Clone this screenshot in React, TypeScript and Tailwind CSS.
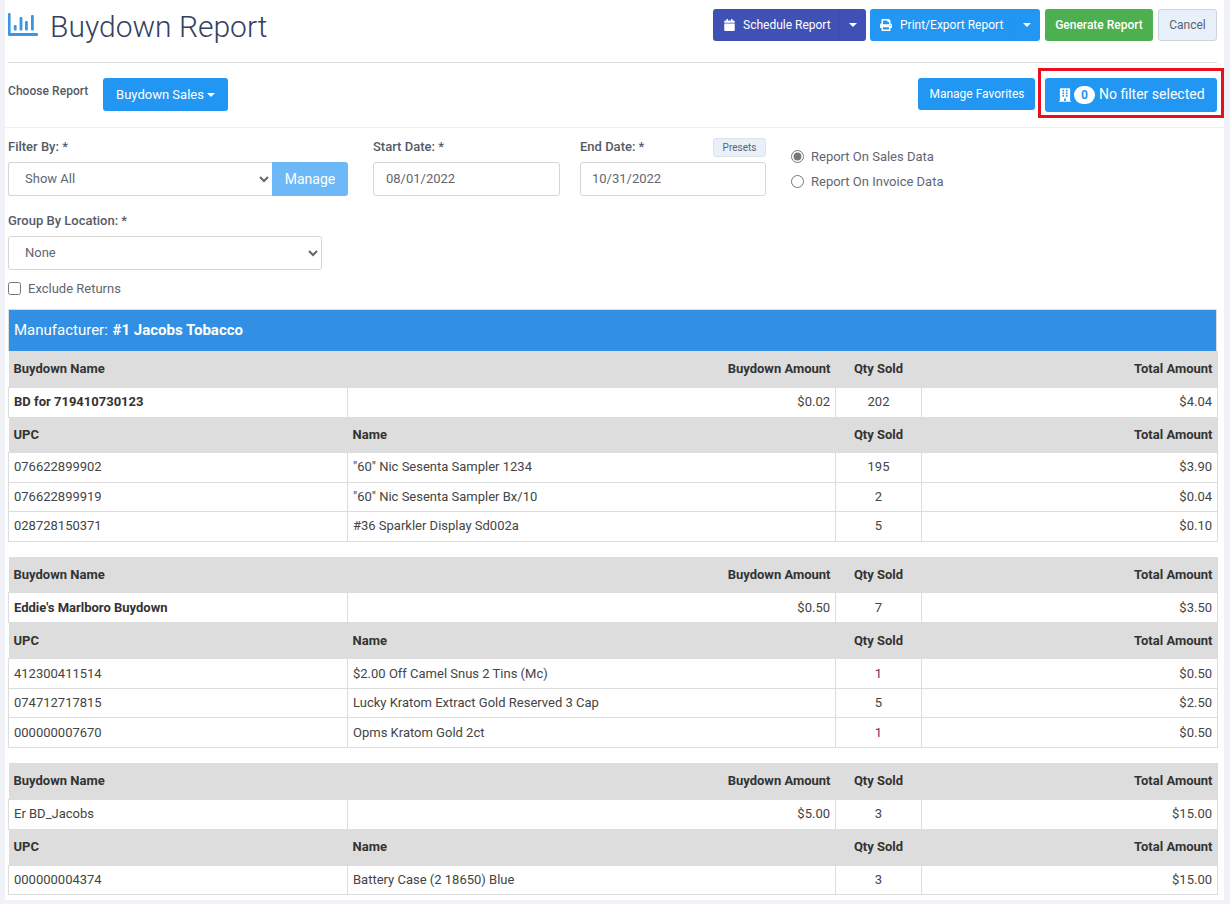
import { FaBuilding, FaCalendar, FaPrint } from 'react-icons/fa';

type Row = { upc: string; name: string; qty: string; total: string; h: string; link?: boolean };
type Group = {
  name: string;
  bold?: boolean;
  amount: string;
  qty: string;
  total: string;
  gap: string;
  heights: [string, string, string];
  rows: Row[];
};

const groups: Group[] = [
  {
    name: 'BD for 719410730123',
    bold: true,
    amount: '$0.02',
    qty: '202',
    total: '$4.04',
    gap: 'mt-0',
    heights: ['h-[36px]', 'h-[30px]', 'h-[35px]'],
    rows: [
      { upc: '076622899902', name: '"60" Nic Sesenta Sampler 1234', qty: '195', total: '$3.90', h: 'h-[30px]' },
      { upc: '076622899919', name: '"60" Nic Sesenta Sampler Bx/10', qty: '2', total: '$0.04', h: 'h-[29px]' },
      { upc: '028728150371', name: '#36 Sparkler Display Sd002a', qty: '5', total: '$0.10', h: 'h-[30px]' },
    ],
  },
  {
    name: "Eddie's Marlboro Buydown",
    bold: true,
    amount: '$0.50',
    qty: '7',
    total: '$3.50',
    gap: 'mt-[15px]',
    heights: ['h-[36px]', 'h-[30px]', 'h-[36px]'],
    rows: [
      { upc: '412300411514', name: '$2.00 Off Camel Snus 2 Tins (Mc)', qty: '1', total: '$0.50', h: 'h-[30px]', link: true },
      { upc: '074712717815', name: 'Lucky Kratom Extract Gold Reserved 3 Cap', qty: '5', total: '$2.50', h: 'h-[29px]' },
      { upc: '000000007670', name: 'Opms Kratom Gold 2ct', qty: '1', total: '$0.50', h: 'h-[30px]', link: true },
    ],
  },
  {
    name: 'Er BD_Jacobs',
    amount: '$5.00',
    qty: '3',
    total: '$15.00',
    gap: 'mt-[15px]',
    heights: ['h-[36px]', 'h-[30px]', 'h-[36px]'],
    rows: [{ upc: '000000004374', name: 'Battery Case (2 18650) Blue', qty: '3', total: '$15.00', h: 'h-[29px]' }],
  },
];

function ReportTable({ group }: { group: Group }) {
  const td = 'border border-[#ddd] px-[5px] py-0 text-[13px]';
  const th = 'px-[5px] py-0 text-[13px] font-bold text-[#333] bg-[#ddd]';
  return (
    <table className={`${group.gap} w-[1209px] table-fixed border-collapse`}>
      <colgroup>
        <col className="w-[339px]" />
        <col className="w-[488px]" />
        <col className="w-[86px]" />
        <col className="w-[296px]" />
      </colgroup>
      <tbody>
        <tr className={group.heights[0]}>
          <th className={`${th} text-left`}>Buydown Name</th>
          <th className={`${th} text-right`}>Buydown Amount</th>
          <th className={`${th} text-center`}>Qty Sold</th>
          <th className={`${th} text-right`}>Total Amount</th>
        </tr>
        <tr className={group.heights[1]}>
          <td className={`${td} ${group.bold ? 'font-bold text-[#333]' : 'text-[#444]'}`}>{group.name}</td>
          <td className={`${td} text-right text-[#444]`}>{group.amount}</td>
          <td className={`${td} text-center text-[#444]`}>{group.qty}</td>
          <td className={`${td} text-right text-[#444]`}>{group.total}</td>
        </tr>
        <tr className={group.heights[2]}>
          <th className={`${th} text-left`}>UPC</th>
          <th className={`${th} text-left`}>Name</th>
          <th className={`${th} text-center`}>Qty Sold</th>
          <th className={`${th} text-right`}>Total Amount</th>
        </tr>
        {group.rows.map((row) => (
          <tr key={row.upc} className={row.h}>
            <td className={`${td} text-[#444]`}>{row.upc}</td>
            <td className={`${td} text-[#444]`}>{row.name}</td>
            <td className={`${td} text-center ${row.link ? 'text-[#7a2a6a]' : 'text-[#444]'}`}>{row.qty}</td>
            <td className={`${td} text-right text-[#444]`}>{row.total}</td>
          </tr>
        ))}
      </tbody>
    </table>
  );
}

function Caret() {
  return <span className="inline-block border-x-[4px] border-t-[4px] border-x-transparent border-t-white" />;
}

export default function App() {
  const label = 'block text-[13px] font-medium leading-[15px] text-[#555b66]';
  const field =
    'h-[34px] rounded-[3px] border border-[#d5d5d5] bg-white pb-[2px] text-[13px] text-[#5f6672] outline-none';

  return (
    <div className="h-[904px] overflow-hidden bg-[#f1f2f8] pl-[5px] pr-[6px] font-['Roboto',sans-serif]">
      <div className="h-[900px] bg-white">
        <div className="ml-[3px] mr-[7px] flex h-[63px] items-start justify-between border-b border-[#ddd]">
          <div className="flex items-center gap-[13px] pt-[9px]">
            <svg viewBox="0 0 30 23" className="mb-[5px] h-[23px] w-[30px]" fill="#3a96e4">
              <path d="M0 1.2a1.2 1.2 0 0 1 2.6 0V20h26.2a1.3 1.3 0 0 1 0 3H1.3A1.3 1.3 0 0 1 0 21.7z" />
              <rect x="5.8" y="12" width="2.8" height="5.4" rx="1" />
              <rect x="11.6" y="4" width="2.8" height="13.4" rx="1" />
              <rect x="17" y="8" width="2.8" height="9.4" rx="1" />
              <rect x="23" y="2" width="2.8" height="15.4" rx="1" />
            </svg>
            <h1 className="-ml-[1px] text-[30px] font-light leading-[36px] text-[#34405e]">Buydown Report</h1>
          </div>
          <div className="flex items-center pt-[9px] text-[12px] text-white">
            <div className="flex h-[32px] w-[153px] items-center rounded-[3px] bg-[#3f51b5]">
              <span className="flex h-full w-[127px] items-center gap-[8px] border-r border-[#3c4dad] pl-[11px]">
                <FaCalendar className="h-[12px] w-[11px]" />
                Schedule Report
              </span>
              <span className="flex flex-1 justify-center"><Caret /></span>
            </div>
            <div className="ml-[4px] flex h-[32px] w-[170px] items-center rounded-[3px] bg-[#2196f3]">
              <span className="flex h-full w-[144px] items-center gap-[8px] border-r border-[#2093f0] pl-[10px]">
                <FaPrint className="h-[12px] w-[12px]" />
                Print/Export Report
              </span>
              <span className="flex flex-1 justify-center"><Caret /></span>
            </div>
            <button className="ml-[5px] h-[32px] w-[108px] rounded-[3px] bg-[#4caf50] font-medium">Generate Report</button>
            <button className="ml-[5px] h-[32px] w-[59px] rounded-[3px] border border-[#ccd3da] bg-[#e8f1fa] text-[#5a6270]">Cancel</button>
          </div>
        </div>

        <div className="flex h-[65px] items-start justify-between border-b border-[#eee] pl-[3px] pr-[7px]">
          <div className="flex items-start">
            <span className="mt-[21px] w-[95px] text-[12px] font-medium leading-[15px] tracking-[0.05px] text-[#555b66]">Choose Report</span>
            <button className="mt-[15px] flex h-[33px] w-[125px] items-center justify-center gap-[3px] rounded-[3px] bg-[#2196f3] text-[13px] text-white">
              Buydown Sales <Caret />
            </button>
          </div>
          <div className="flex items-start gap-[10px]">
            <button className="mt-[15px] h-[32px] w-[117px] rounded-[3px] bg-[#2196f3] pl-[1px] text-[12px] text-white">Manage Favorites</button>
            <button className="relative mt-[15px] flex h-[34px] w-[172px] items-center gap-[3px] rounded-[3px] bg-[#2196f3] pb-[1px] pl-[14px] text-[14px] text-white">
              <FaBuilding className="h-[14px] w-[12px]" />
              <span className="flex h-[18px] w-[21px] items-center justify-center rounded-full bg-white text-[12px] font-bold text-[#2196f3]">0</span>
              <span className="ml-[1px]">No filter selected</span>
              <span className="absolute -left-[7px] -right-[7px] -top-[10px] -bottom-[6px] border-[3px] border-[#e8101f]" />
            </button>
          </div>
        </div>

        <div className="pl-[3px] pr-[7px]">
          <div className="flex items-start pt-[11px]">
            <div className="w-[340px]">
              <label className={label}>Filter By: *</label>
              <div className="mt-[8px] flex">
                <select defaultValue="all" className={`${field} w-[264px] rounded-r-none border-r-0 pl-[12px]`}>
                  <option value="all">Show All</option>
                </select>
                <button className="h-[34px] w-[76px] rounded-r-[3px] bg-[#6db8f7] text-[14px] text-white">Manage</button>
              </div>
            </div>
            <div className="ml-[25px] w-[187px]">
              <label className={label}>Start Date: *</label>
              <input defaultValue="08/01/2022" className={`${field} mt-[8px] w-full px-[12px]`} />
            </div>
            <div className="relative ml-[20px] w-[186px]">
              <label className={label}>End Date: *</label>
              <span className="absolute right-0 -top-[1px] flex h-[19px] w-[53px] items-center justify-center rounded-[3px] border border-[#dbe3ea] bg-[#e8f1fa] text-[10px] text-[#5a6270]">Presets</span>
              <input defaultValue="10/31/2022" className={`${field} mt-[8px] w-full px-[11px]`} />
            </div>
            <div className="ml-[25px] flex flex-col gap-[12px] pt-[11px] text-[13px] leading-[13px] text-[#5f6672]">
              <label className="flex items-center gap-[7px]">
                <input type="radio" name="source" defaultChecked className="m-0 h-[13px] w-[13px] accent-[#777]" />
                Report On Sales Data
              </label>
              <label className="flex items-center gap-[7px]">
                <input type="radio" name="source" className="m-0 h-[13px] w-[13px]" />
                Report On Invoice Data
              </label>
            </div>
          </div>

          <label className={`${label} mt-[17px]`}>Group By Location: *</label>
          <select defaultValue="none" className={`${field} mt-[8px] w-[314px] pl-[12px]`}>
            <option value="none">None</option>
          </select>
          <label className="mt-[11px] flex h-[15px] items-center gap-[7px] text-[13px] text-[#5f6672]">
            <input type="checkbox" className="m-0 h-[13px] w-[13px]" />
            Exclude Returns
          </label>

          <div className="mt-[13px] flex h-[42px] w-[1209px] items-center border border-b-0 border-[#ddd] bg-[#3190e3] pl-[5px] text-[15px] text-white">
            <span>Manufacturer:&nbsp;</span>
            <b className="ml-[1px] font-bold">#1 Jacobs Tobacco</b>
          </div>
          {groups.map((group) => (
            <ReportTable key={group.name} group={group} />
          ))}
        </div>
      </div>
    </div>
  );
}
